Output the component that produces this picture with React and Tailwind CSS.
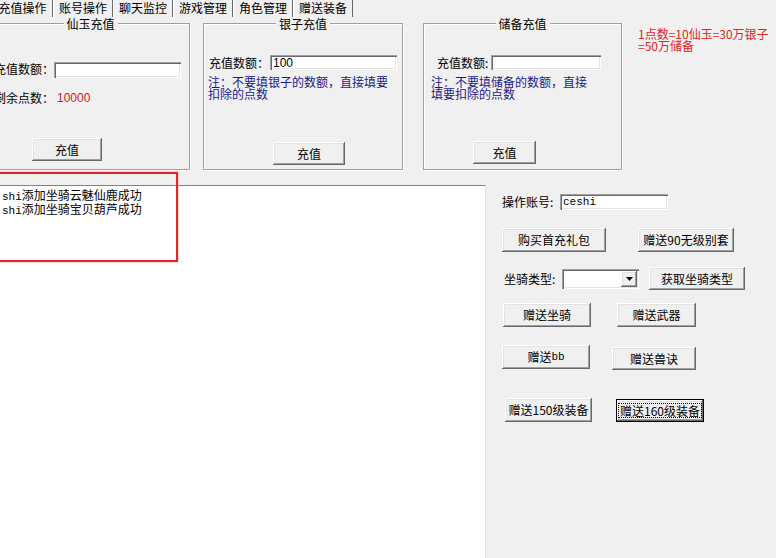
import React from 'react';

const raised = 'bg-[#f0f0f0] shadow-[inset_-1px_-1px_#696969,inset_1px_1px_#fff,inset_-2px_-2px_#a0a0a0,inset_2px_2px_#e3e3e3]';
const sunken = 'bg-white shadow-[inset_1px_1px_#a0a0a0,inset_2px_2px_#696969,inset_-1px_-1px_#fff,inset_-2px_-2px_#e3e3e3]';

function Btn({ className = '', focused = false, children }) {
  if (focused) {
    return (
      <div className={`flex items-center justify-center border border-black ${raised} ${className}`}>
        <span className="outline-1 outline-dotted outline-black px-[1px] leading-[13px]">{children}</span>
      </div>
    );
  }
  return (
    <div className={`flex items-center justify-center leading-[12px] ${raised} ${className}`}>
      {children}
    </div>
  );
}

function Field({ className = '', children }) {
  return <div className={`flex items-center pl-[3px] leading-[12px] ${sunken} ${className}`}>{children}</div>;
}

function Group({ title, className = '', children }) {
  return (
    <div className={`relative h-[147px] border border-[#a0a0a0] shadow-[inset_1px_1px_#fff,1px_1px_#fff] ${className}`}>
      <span className="absolute left-1/2 top-[-7px] -translate-x-1/2 bg-[#f0f0f0] px-[3px] leading-[13px] whitespace-nowrap">
        {title}
      </span>
      {children}
    </div>
  );
}

const tabs = ['充值操作', '账号操作', '聊天监控', '游戏管理', '角色管理', '赠送装备'];

export default function App() {
  return (
    <div className="relative w-[776px] h-[558px] overflow-hidden bg-[#f0f0f0] text-[12px] leading-[12px] text-black font-['Noto_Sans_CJK_SC','Noto_Sans',sans-serif]">
      {/* tab strip */}
      <div className="flex h-[18px] ml-[-7px]">
        {tabs.map((t, i) => (
          <div
            key={t}
            className={`w-[60px] h-[17px] flex justify-center pt-[2px] border-r border-r-[#696969] ${i === 0 ? '' : 'border-l border-l-white'}`}
          >
            {t}
          </div>
        ))}
      </div>

      {/* top groups */}
      <div className="flex items-start h-[167px] pt-[5px]">
        <Group title="仙玉充值" className="ml-[-9px] w-[199px]">
          <div className="flex items-center h-[16px] mt-[38px]">
            <span className="ml-[2px] w-[60px] -mt-[3px]">充值数额：</span>
            <Field className="w-[127px] h-[16px]" />
          </div>
          <div className="flex mt-[14px] ml-[2px]">
            <span className="w-[60px]">剩余点数：</span>
            <span className="ml-[3px] text-[#d01818] font-['Liberation_Sans',sans-serif]">10000</span>
          </div>
          <Btn className="mt-[34px] ml-[40px] w-[70px] h-[23px]">充值</Btn>
        </Group>

        <Group title="银子充值" className="ml-[13px] w-[200px]">
          <div className="flex items-center h-[15px] mt-[31px]">
            <span className="ml-[5px] w-[61px]">充值数额：</span>
            <Field className="w-[127px] h-[15px] font-['Liberation_Sans',sans-serif]">100</Field>
          </div>
          <div className="mt-[6px] ml-[4px] text-[#1a1a8c] leading-[12px]">
            注：不要填银子的数额，直接填要<br />扣除的点数
          </div>
          <Btn className="mt-[42px] ml-[69px] w-[72px] h-[23px]">充值</Btn>
        </Group>

        <Group title="储备充值" className="ml-[20px] w-[199px]">
          <div className="flex items-center h-[15px] mt-[31px]">
            <span className="ml-[13px] w-[54px] whitespace-nowrap">充值数额:</span>
            <Field className="w-[110px] h-[15px]" />
          </div>
          <div className="mt-[6px] ml-[7px] text-[#1a1a8c] leading-[12px]">
            注：不要填储备的数额，直接<br />填要扣除的点数
          </div>
          <Btn className="mt-[41px] ml-[49px] w-[63px] h-[23px]">充值</Btn>
        </Group>

        <div className="ml-[16px] mt-[5px] text-[#e02424] leading-[12px] whitespace-nowrap">
          1点数=10仙玉=30万银子<br />=50万储备
        </div>
      </div>

      {/* bottom area */}
      <div className="flex h-[373px]">
        <div className="w-[486px] h-full bg-white border-t border-t-[#828282] border-r border-r-[#e3e3e3] pt-[3px] pl-[2px] leading-[12px]">
          <div><span className="font-['Liberation_Mono',monospace] text-[11px]">shi</span>添加坐骑云魅仙鹿成功</div>
          <div><span className="font-['Liberation_Mono',monospace] text-[11px]">shi</span>添加坐骑宝贝葫芦成功</div>
        </div>

        <div className="flex-1 flex flex-col pt-[9px]">
          <div className="flex items-center h-[16px]">
            <span className="ml-[16px] w-[58px] whitespace-nowrap">操作账号:</span>
            <Field className="w-[108px] h-[16px] font-['Liberation_Mono',monospace] text-[11px]">ceshi</Field>
          </div>

          <div className="flex mt-[18px]">
            <Btn className="ml-[16px] w-[104px] h-[24px]">购买首充礼包</Btn>
            <Btn className="ml-[32px] w-[96px] h-[24px]">赠送90无级别套</Btn>
          </div>

          <div className="flex items-center h-[23px] mt-[15px]">
            <span className="ml-[18px] w-[58px] whitespace-nowrap">坐骑类型:</span>
            <div className={`relative w-[77px] h-[20px] ${sunken}`}>
              <div className={`absolute right-[2px] top-[2px] w-[16px] h-[16px] flex items-center justify-center ${raised}`}>
                <svg width="7" height="4" viewBox="0 0 7 4">
                  <polygon points="0,0 7,0 3.5,4" fill="#000" />
                </svg>
              </div>
            </div>
            <Btn className="ml-[10px] w-[96px] h-[23px]">获取坐骑类型</Btn>
          </div>

          <div className="flex mt-[13px]">
            <Btn className="ml-[17px] w-[88px] h-[24px]">赠送坐骑</Btn>
            <Btn className="ml-[26px] w-[79px] h-[24px]">赠送武器</Btn>
          </div>

          <div className="flex items-start mt-[18px]">
            <Btn className="ml-[16px] w-[88px] h-[24px]">赠送<span className="font-['Liberation_Mono',monospace] text-[11px]">bb</span></Btn>
            <Btn className="ml-[22px] mt-[2px] w-[84px] h-[23px]">赠送兽诀</Btn>
          </div>

          <div className="flex items-start mt-[28px]">
            <Btn className="ml-[19px] w-[87px] h-[24px]">赠送150级装备</Btn>
            <Btn focused className="ml-[24px] mt-[1px] w-[88px] h-[23px]">赠送160级装备</Btn>
          </div>
        </div>
      </div>

      {/* red highlight annotation */}
      <div className="absolute left-[-5px] top-[172px] w-[183px] h-[90px] border-2 border-[#e0262b] shadow-[0_0_2px_#f59a9a]" />
    </div>
  );
}
